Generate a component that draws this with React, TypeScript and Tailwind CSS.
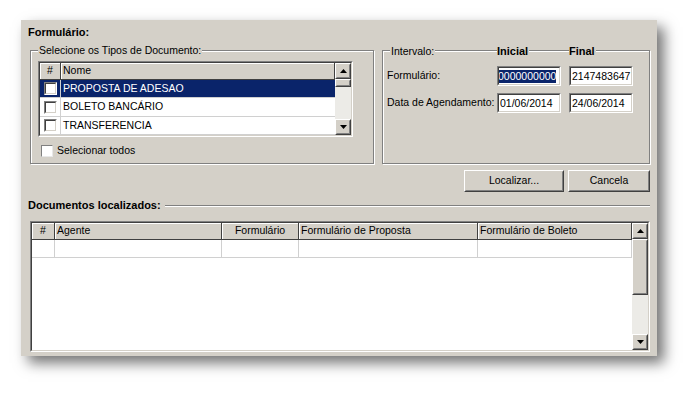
import React from "react";

const Up = () => (
  <svg width="7" height="4" viewBox="0 0 7 4"><polygon points="3.5,0 7,4 0,4" fill="#000" /></svg>
);
const Down = () => (
  <svg width="7" height="4" viewBox="0 0 7 4"><polygon points="0,0 7,0 3.5,4" fill="#000" /></svg>
);

function Raised({ className = "", children }: { className?: string; children?: React.ReactNode }) {
  return (
    <div className={`border border-t-white border-l-white border-r-[#404040] border-b-[#404040] ${className}`}>
      <div className="w-full h-full border border-t-[#d4d0c8] border-l-[#d4d0c8] border-r-[#808080] border-b-[#808080] bg-[#d4d0c8] flex items-center justify-center">
        {children}
      </div>
    </div>
  );
}

function Sunken({ className = "", innerClass = "", children }: { className?: string; innerClass?: string; children?: React.ReactNode }) {
  return (
    <div className={`border border-t-[#808080] border-l-[#808080] border-b-white border-r-white ${className}`}>
      <div className={`w-full h-full border border-t-[#404040] border-l-[#404040] border-b-[#d4d0c8] border-r-[#d4d0c8] ${innerClass}`}>
        {children}
      </div>
    </div>
  );
}

function ScrollBar({ thumb }: { thumb: string }) {
  return (
    <div className="w-[16px] h-full flex flex-col bg-[#ecebe7]">
      <Raised className="h-[16px] w-[16px]"><Up /></Raised>
      <Raised className={`w-[16px] ${thumb}`} />
      <div className="flex-1" />
      <Raised className="h-[16px] w-[16px]"><Down /></Raised>
    </div>
  );
}

function CheckBox() {
  return (
    <div className="w-[13px] h-[13px] border border-t-[#808080] border-l-[#808080] border-b-white border-r-white">
      <div className="w-full h-full bg-white border border-t-[#404040] border-l-[#404040] border-b-[#d4d0c8] border-r-[#d4d0c8]" />
    </div>
  );
}

function Input({ value, selected }: { value: string; selected?: boolean }) {
  return (
    <Sunken className="w-[64px] h-[20px]" innerClass="bg-white overflow-hidden flex items-center pl-[1px]">
      {selected ? (
        <span className="bg-[#0a246a] text-white whitespace-nowrap leading-[13px] -ml-[2px]">{value}</span>
      ) : (
        <span className="whitespace-nowrap leading-[13px]">{value}</span>
      )}
    </Sunken>
  );
}

const etched = "border border-t-[#808080] border-l-[#808080] border-r-[#808080] border-b-[#808080] shadow-[inset_1px_1px_0_#fff,1px_1px_0_#fff]";

export default function App() {
  const rows = [
    { t: "PROPOSTA DE ADESAO", h: "h-[18px]" },
    { t: "BOLETO BANCÁRIO", h: "h-[19px]" },
    { t: "TRANSFERENCIA", h: "h-[18px]" },
  ];
  return (
    <div className="w-[699px] h-[399px] bg-white pt-[20px] pl-[21px] font-['Liberation_Sans',Arial,sans-serif] text-[10.5px] text-black">
      <div className="w-[636px] h-[336px] bg-[#d4d0c8] shadow-[7px_7px_13px_rgba(0,0,0,0.55)] flex flex-col px-[7px]">
        <div className="mt-[6px] h-[13px] leading-[13px] font-bold text-[11px]">Formulário:</div>

        <div className="mt-[11px] flex gap-[8px] ml-[2px]">
          {/* Left group box */}
          <div className={`w-[344px] h-[114px] ${etched} flex flex-col`}>
            <div className="-mt-[7px] h-[13px] flex items-center ml-[7px]">
              <span className="bg-[#d4d0c8] px-[1px] leading-[13px]">Selecione os Tipos de Documento:</span>
            </div>
            <Sunken className="mt-[4px] ml-[7px] w-[315px] h-[76px]" innerClass="flex bg-white">
              <div className="flex-1 flex flex-col">
                <div className="h-[17px] flex bg-[#d4d0c8]">
                  <div className="w-[21px] border-r border-r-[#404040] border-b border-b-[#404040] shadow-[inset_1px_1px_0_#fff] flex items-center justify-center">#</div>
                  <div className="flex-1 border-r border-r-[#404040] border-b border-b-[#404040] shadow-[inset_1px_1px_0_#fff] flex items-center pl-[2px]">Nome</div>
                </div>
                {rows.map((r, i) => (
                  <div key={r.t} className={`${r.h} flex border-b border-b-[#d0d0d0] ${i === 0 ? "bg-[#0a246a] text-white" : "bg-white"}`}>
                    <div className="w-[21px] border-r border-r-[#d0d0d0] flex items-center justify-center">
                      <CheckBox />
                    </div>
                    <div className="flex-1 flex items-center pl-[2px]">{r.t}</div>
                  </div>
                ))}
              </div>
              <ScrollBar thumb="h-[8px]" />
            </Sunken>
            <div className="mt-[7px] ml-[10px] h-[13px] flex items-center gap-[4px]">
              <div className="w-[12px] h-[12px] bg-white border border-t-[#808080] border-l-[#808080] border-b-[#e8e8e8] border-r-[#e8e8e8]" />
              <span className="leading-[13px]">Selecionar todos</span>
            </div>
          </div>

          {/* Right group box */}
          <div className={`w-[268px] h-[114px] ${etched} flex flex-col`}>
            <div className="-mt-[7px] h-[13px] grid grid-cols-[102px_64px_64px] gap-x-[8px] ml-[4px]">
              <div className="pl-[3px]"><span className="bg-[#d4d0c8] px-[1px] leading-[13px]">Intervalo:</span></div>
              <div><span className="bg-[#d4d0c8] pr-[1px] leading-[13px] font-bold text-[11px]">Inicial</span></div>
              <div><span className="bg-[#d4d0c8] pr-[1px] leading-[13px] font-bold text-[11px]">Final</span></div>
            </div>
            <div className="mt-[9px] ml-[4px] grid grid-cols-[102px_64px_64px] gap-x-[8px] gap-y-[7px] items-center">
              <div>Formulário:</div>
              <Input value="0000000000" selected />
              <Input value="2147483647" />
              <div className="whitespace-nowrap">Data de Agendamento:</div>
              <Input value="01/06/2014" />
              <Input value="24/06/2014" />
            </div>
          </div>
        </div>

        <div className="mt-[6px] flex justify-end gap-[4px]">
          <Raised className="w-[100px] h-[22px]"><span>Localizar...</span></Raised>
          <Raised className="w-[82px] h-[22px]"><span>Cancela</span></Raised>
        </div>

        <div className="mt-[7px] h-[13px] flex items-center">
          <span className="font-bold text-[11px] leading-[13px] whitespace-nowrap">Documentos localizados:</span>
          <div className="flex-1 ml-[4px] h-px bg-[#808080] shadow-[0_1px_0_#fff]" />
        </div>

        <Sunken className="mt-[9px] ml-[2px] w-[620px] h-[131px]" innerClass="flex bg-white">
          <div className="flex-1 flex flex-col">
            <div className="h-[17px] flex bg-[#d4d0c8]">
              <div className="w-[23px] border-r border-r-[#404040] border-b border-b-[#404040] shadow-[inset_1px_1px_0_#fff] flex items-center justify-center">#</div>
              <div className="w-[167px] border-r border-r-[#404040] border-b border-b-[#404040] shadow-[inset_1px_1px_0_#fff] flex items-center pl-[2px]">Agente</div>
              <div className="w-[77px] border-r border-r-[#404040] border-b border-b-[#404040] shadow-[inset_1px_1px_0_#fff] flex items-center justify-center">Formulário</div>
              <div className="w-[179px] border-r border-r-[#404040] border-b border-b-[#404040] shadow-[inset_1px_1px_0_#fff] flex items-center pl-[2px]">Formulário de Proposta</div>
              <div className="flex-1 border-r border-r-[#404040] border-b border-b-[#404040] shadow-[inset_1px_1px_0_#fff] flex items-center pl-[2px]">Formulário de Boleto</div>
            </div>
            <div className="h-[18px] flex border-b border-b-[#d0d0d0]">
              <div className="w-[23px] border-r border-r-[#d0d0d0]" />
              <div className="w-[167px] border-r border-r-[#d0d0d0]" />
              <div className="w-[77px] border-r border-r-[#d0d0d0]" />
              <div className="w-[179px] border-r border-r-[#d0d0d0]" />
              <div className="flex-1 border-r border-r-[#d0d0d0]" />
            </div>
          </div>
          <ScrollBar thumb="h-[56px]" />
        </Sunken>
      </div>
    </div>
  );
}
